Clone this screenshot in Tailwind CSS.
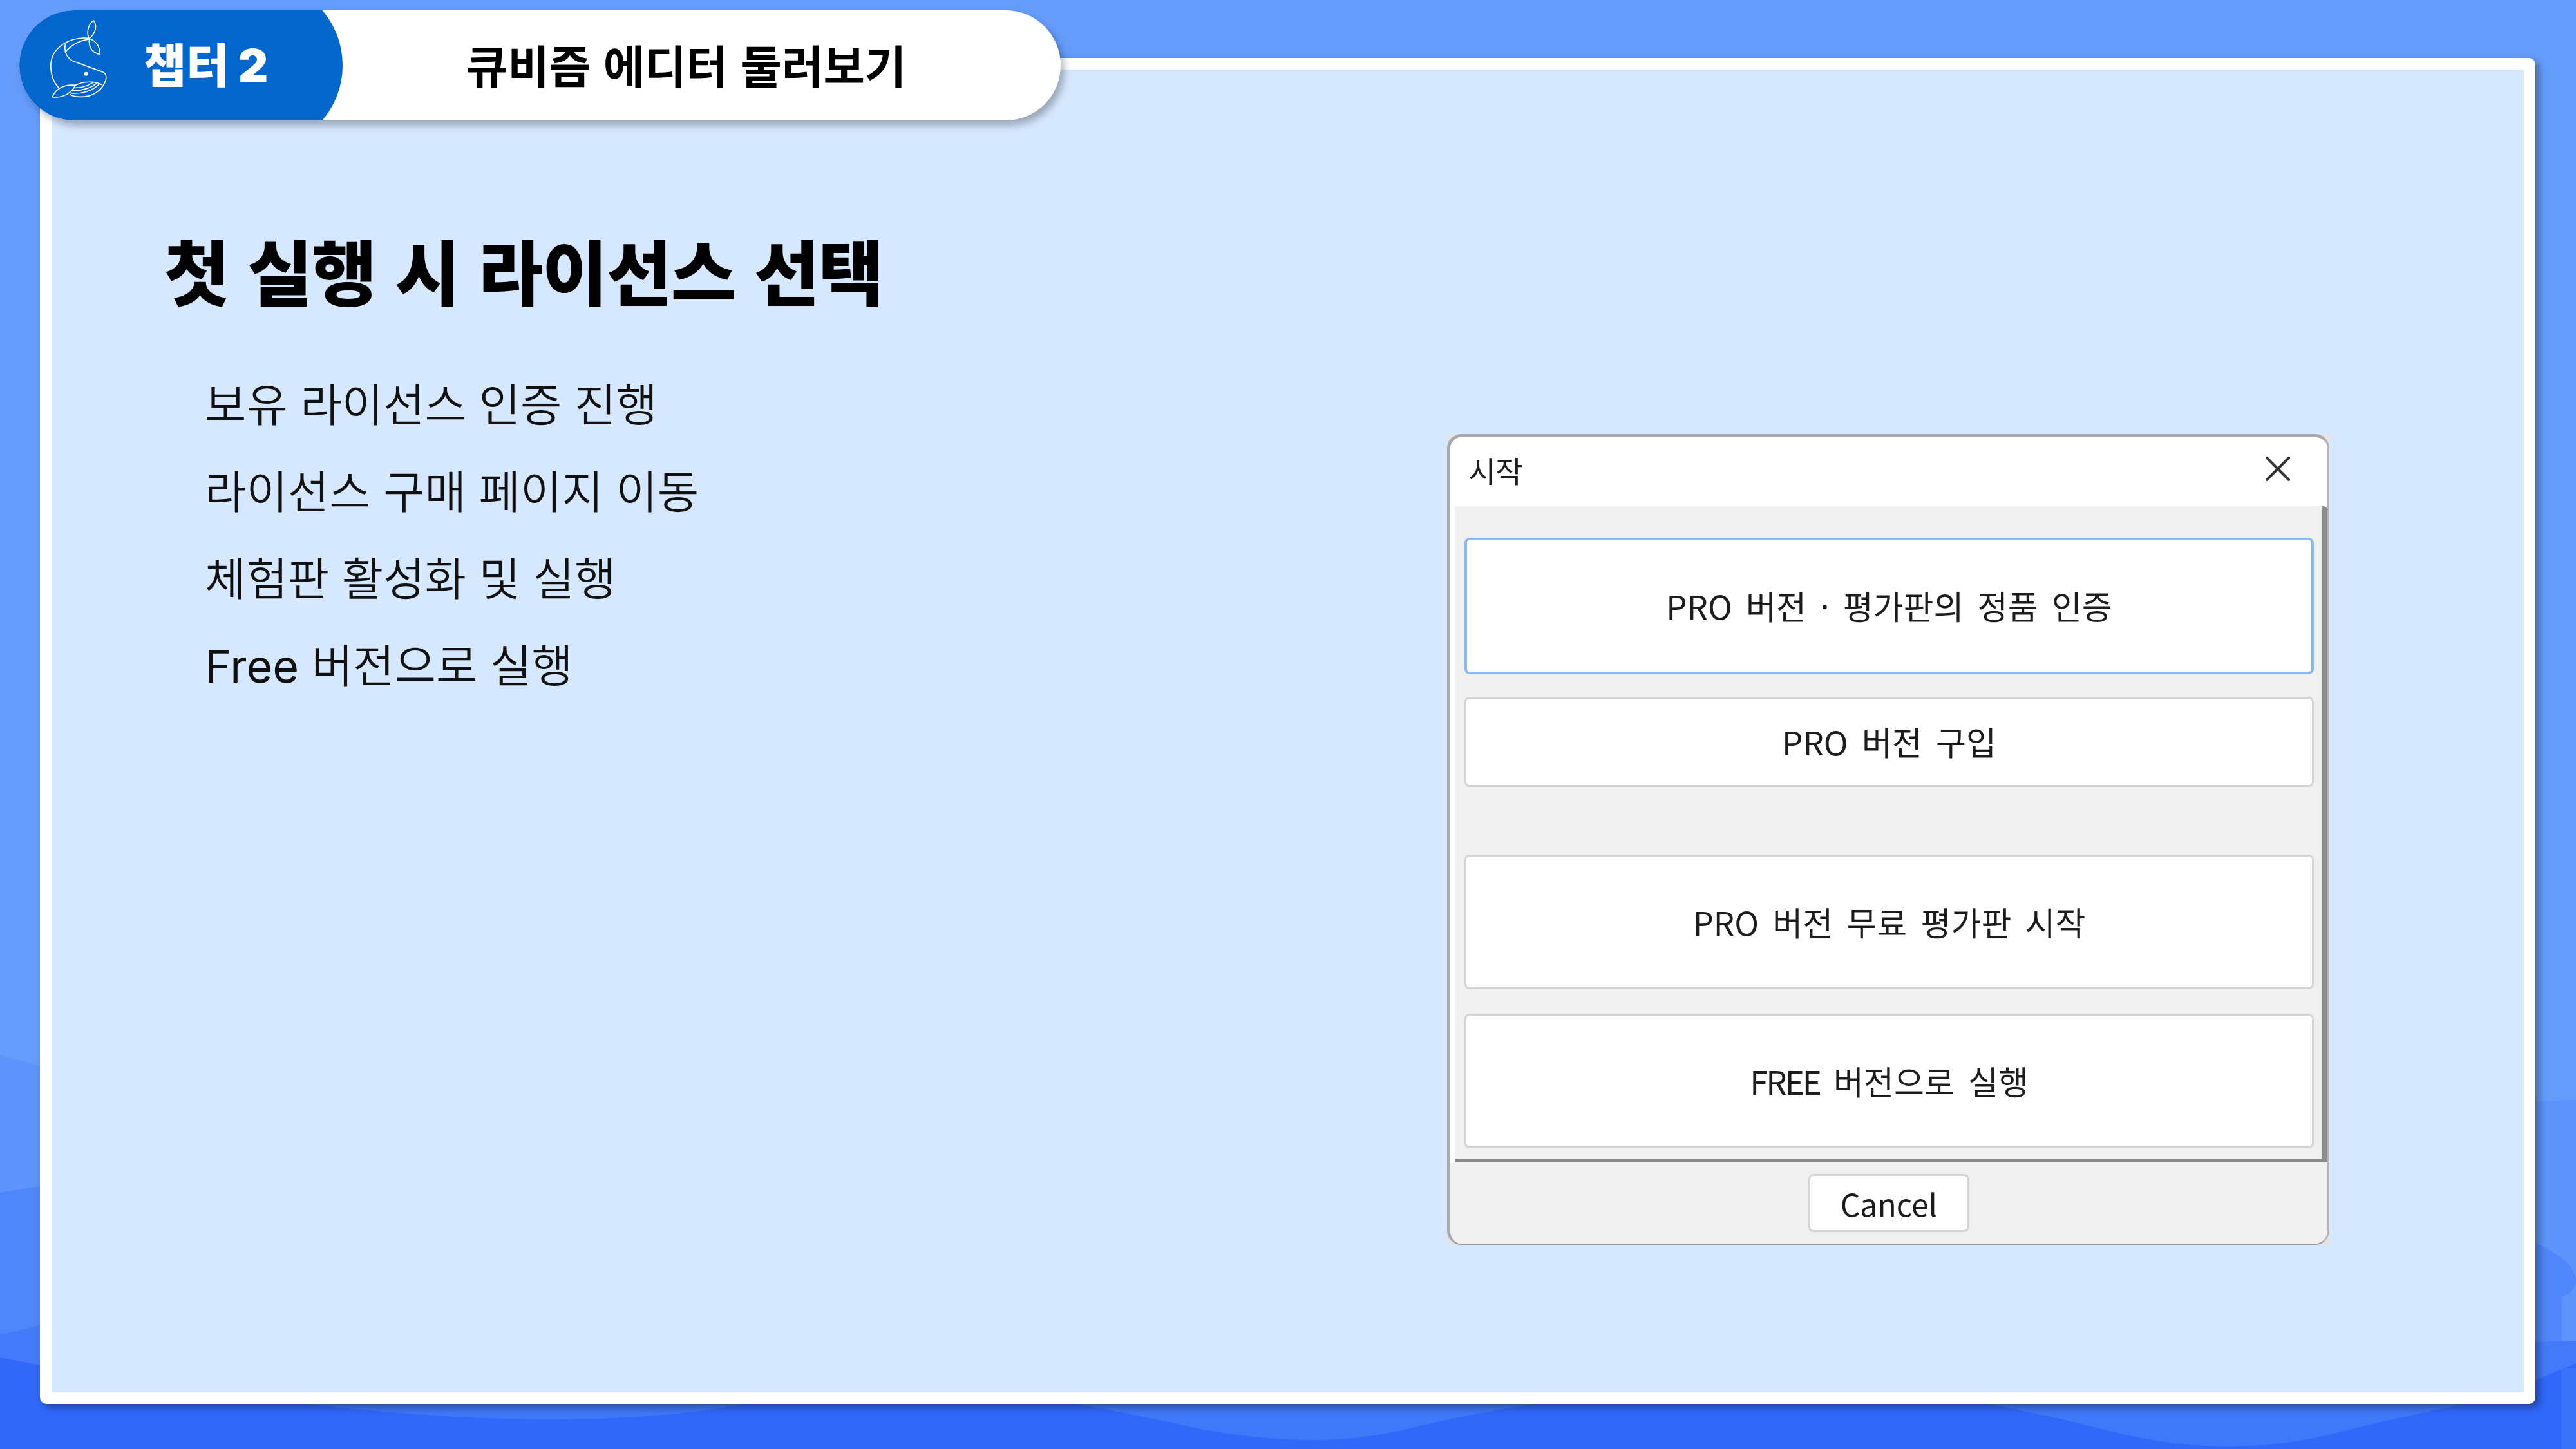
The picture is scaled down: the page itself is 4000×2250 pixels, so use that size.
<!DOCTYPE html>
<html lang="ko">
<head>
<meta charset="utf-8">
<title>첫 실행 시 라이선스 선택</title>
<script src="https://cdn.jsdelivr.net/npm/@tailwindcss/browser@4"></script>
</head>
<body class="m-0 font-['Noto_Sans_CJK_KR','Noto_Sans',sans-serif]">
<div class="relative w-[4000px] h-[2250px] overflow-hidden bg-[#659cfb] pt-[90px] pl-[62px]">
  <svg class="absolute inset-0" width="4000" height="2250" viewBox="0 0 4000 2250" fill="none">
    <path fill="#5c94fb" d="M0 1638 L62 1655 L3937 1710 L4000 1708 L4000 2250 L0 2250Z"/>
    <path fill="#4f86fb" d="M0 1852 L62 1842 L3937 1930 C3970 1945 4000 1965 4000 1988 C4000 2000 3990 2010 3978 2014 L3978 2250 L0 2250Z"/>
    <path fill="#4479fa" d="M0 2073 L62 2058 L3937 2084 L4000 2082 L4000 2250 L0 2250Z"/>
    <path fill="#3068fa" d="M0 2108 L62 2120 L3937 2143 L4000 2117 L4000 2250 L0 2250Z"/>
    <rect x="3978" y="2125" width="22" height="125" fill="#3a72fa"/>
    <path fill="#3f78f8" d="M472 2170 L472 2180 C620 2196 740 2204 855 2204 C980 2204 1080 2195 1153 2180 L1153 2170Z"/>
    <path fill="#3f78f8" d="M1671 2170 L1671 2180 C1750 2194 1800 2205 1837 2213 C1900 2228 1970 2236 2040 2236 C2100 2236 2150 2228 2194 2217 C2260 2200 2320 2190 2385 2180 L2385 2170Z"/>
    <path fill="#3f78f8" d="M3087 2170 L3087 2180 C3150 2192 3200 2203 3240 2213 C3310 2232 3380 2246 3457 2246 C3530 2246 3590 2236 3648 2220 C3710 2204 3770 2192 3827 2180 L3827 2170Z"/>
  </svg>

  <main class="relative w-[3875px] h-[2090px] border-[18px] border-white rounded-[10px] bg-[#d6e8ff] shadow-[6px_6px_12px_rgba(0,0,0,0.35)] pl-[175px] flex">
    <section class="w-[1992px] shrink-0 pt-[254px]">
      <h1 class="text-[110px] leading-[112px] tracking-[-1.4px] font-black text-black whitespace-nowrap">첫 실행 시 라이선스 선택</h1>
      <ul class="mt-[83px] pl-[63px] text-[70px] leading-[135px] font-[350] text-[#111111] whitespace-nowrap">
        <li>보유 라이선스 인증 진행</li>
        <li>라이선스 구매 페이지 이동</li>
        <li>체험판 활성화 및 실행</li>
        <li><span class="font-['Inter','Noto_Sans',sans-serif] font-normal">Free</span> 버전으로 실행</li>
      </ul>
    </section>

    <section class="mt-[566px] w-[1370px] h-[1259px] shrink-0 bg-[#e4e4e4] text-[#1c1c1c] blur-[0.6px]">
      <div class="h-full flex flex-col rounded-[22px] overflow-hidden border-t-[5px] border-l-[5px] border-r-[3px] border-b-[2px] border-t-[#aaaaaa] border-l-[#aaaaaa] border-r-[#b5b5b5] border-b-[#999999] bg-white">
        <header class="h-[107px] shrink-0 flex items-center justify-between pl-[28px] pr-[58px]">
          <span class="text-[46px] leading-none mb-[8px]">시작</span>
          <svg class="mb-[10px]" width="38" height="38" viewBox="0 0 38 38" fill="none" stroke="#333333" stroke-width="4" stroke-linecap="round"><path d="M2 2 L36 36 M36 2 L2 36"/></svg>
        </header>
        <div class="flex-1 flex pl-[7px]">
          <div class="flex-1 flex flex-col bg-[#f0f0f0] pl-[15px] pr-[13px] pt-[49px] border-r-[8px] border-b-[5px] border-[#8a8a8a] rounded-tr-[6px]">
            <button class="h-[212px] shrink-0 flex items-center justify-center pb-[1px] bg-white border-[4px] border-[#8ab8f0] rounded-[8px] text-[51px] [word-spacing:7px]">PRO 버전 · 평가판의 정품 인증</button>
            <button class="mt-[35px] h-[140px] shrink-0 flex items-center justify-center pb-[1px] bg-white border-[3px] border-[#d4d4d4] rounded-[8px] text-[51px] [word-spacing:7px]">PRO 버전 구입</button>
            <button class="mt-[105px] h-[209px] shrink-0 flex items-center justify-center pb-[1px] bg-white border-[3px] border-[#d4d4d4] rounded-[8px] text-[51px] [word-spacing:7px]">PRO 버전 무료 평가판 시작</button>
            <button class="mt-[38px] h-[209px] shrink-0 flex items-center justify-center pb-[1px] bg-white border-[3px] border-[#d4d4d4] rounded-[8px] text-[51px] [word-spacing:7px]"><span class="tracking-[-3px]">FREE</span>&nbsp;버전으로 실행</button>
          </div>
        </div>
        <footer class="h-[126px] shrink-0 flex items-start justify-center bg-[#f0f0f0] pt-[18px]">
          <button class="w-[250px] h-[90px] flex items-center justify-center bg-white border-[3px] border-[#d4d4d4] rounded-[8px] text-[48px]">Cancel</button>
        </footer>
      </div>
    </section>
  </main>

  <div class="absolute left-[30px] top-[16px] w-[1617px] h-[171px] flex items-center overflow-hidden bg-white rounded-[85px/85.5px] shadow-[6px_8px_12px_rgba(0,0,0,0.28)]">
    <div class="w-[502px] h-[261px] shrink-0 flex items-center bg-[#0366cc] rounded-r-[130px] pl-[47px]">
      <svg class="mb-[20px] shrink-0" width="90" height="123" viewBox="230 90 270 370" fill="none" stroke="#ffffff" stroke-width="5" stroke-linecap="round" stroke-linejoin="round">
        <path d="M412 178 C330 172 235 215 235 310 C235 350 250 385 272 410"/>
        <path d="M412 183 C370 190 330 210 303 243"/>
        <path d="M303 207 C298 235 305 265 335 283 L480 337 C495 345 497 360 490 380 C470 430 420 455 370 452 C350 452 338 448 325 441"/>
        <path d="M350 398 C390 378 440 378 473 395"/>
        <path d="M243 453 C255 420 290 393 350 398 C335 430 295 460 243 453Z"/>
        <path d="M412 178 C400 140 415 110 435 95 C450 115 450 150 415 180"/>
        <path d="M415 180 C445 190 465 215 465 253 C435 250 410 225 415 180Z"/>
        <path d="M345 410 C380 410 410 400 432 385"/>
        <path d="M338 423 C380 425 425 410 450 388"/>
        <path d="M330 435 C380 440 430 425 462 392"/>
        <circle cx="400" cy="345" r="9" fill="#ffffff" stroke="none"/>
      </svg>
      <span class="ml-[56px] mt-[1px] text-[72px] leading-none font-black text-white whitespace-nowrap font-['Inter','Noto_Sans_CJK_KR',sans-serif]">챕터 2</span>
    </div>
    <span class="ml-[192px] mb-[4px] text-[70px] leading-none font-bold text-black whitespace-nowrap">큐비즘 에디터 둘러보기</span>
  </div>
</div>
</body>
</html>
